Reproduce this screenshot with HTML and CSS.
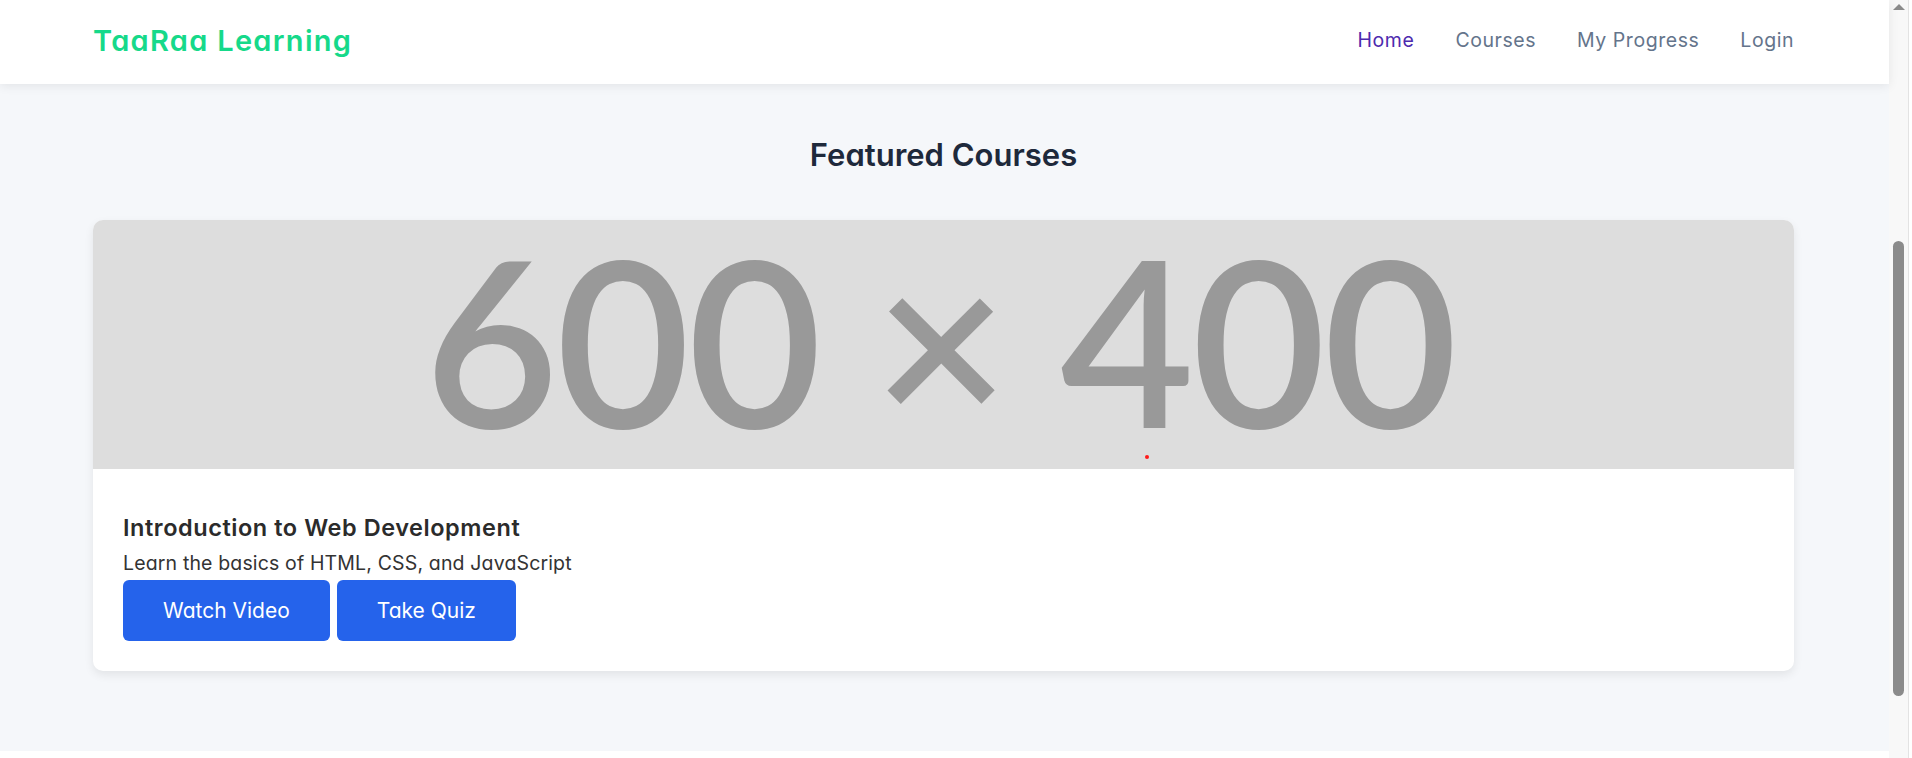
FILE: index.html
```html
<!DOCTYPE html>
<html lang="en">
<head>
<meta charset="utf-8">
<title>TaaRaa Learning</title>
<link rel="stylesheet" href="styles.css">
</head>
<body>
<div class="page">
  <header class="site-header">
    <a class="logo" href="#">TaaRaa Learning</a>
    <nav class="nav">
      <a class="nav-link active" href="#">Home</a>
      <a class="nav-link" href="#">Courses</a>
      <a class="nav-link" href="#">My Progress</a>
      <a class="nav-link" href="#">Login</a>
    </nav>
  </header>
  <main class="featured">
    <h2 class="section-title">Featured Courses</h2>
    <div class="course-card">
      <div class="course-thumb">
        <span class="thumb-label">600 × 400</span>
        <i class="thumb-dot"></i>
      </div>
      <div class="course-body">
        <h3 class="course-title">Introduction to Web Development</h3>
        <p class="course-desc">Learn the basics of HTML, CSS, and JavaScript</p>
        <div class="course-actions">
          <button class="btn">Watch Video</button>
          <button class="btn">Take Quiz</button>
        </div>
      </div>
    </div>
  </main>
  <footer class="site-footer"></footer>
</div>
<div class="scrollbar" aria-hidden="true">
  <div class="scroll-up"><span class="scroll-arrow"></span></div>
  <div class="scroll-thumb"></div>
</div>
</body>
</html>
```

FILE: styles.css
```css
html, body {
  height: 100%;
}
body {
  margin: 0;
  display: flex;
  overflow: hidden;
  background: #f5f7fa;
  font-family: Inter, "Noto Sans", sans-serif;
  font-feature-settings: "cv11";
  color: #333333;
}

.page {
  flex: 1;
  min-width: 0;
  display: flex;
  flex-direction: column;
}

/* scrollbar column */
.scrollbar {
  width: 23px;
  flex: none;
  display: flex;
  flex-direction: column;
  background: linear-gradient(to right, #f8f8f8 0 19px, #e3e3e3 19px 20px, #ffffff 20px);
}
.scroll-up {
  height: 17px;
  width: 19px;
  box-sizing: border-box;
  padding-top: 4px;
  display: flex;
  justify-content: center;
}
.scroll-arrow {
  width: 0;
  height: 0;
  border-left: 6.5px solid transparent;
  border-right: 6.5px solid transparent;
  border-bottom: 6px solid #8b8b8b;
}
.scroll-thumb {
  margin: 224px 0 0 4px;
  width: 11px;
  height: 455px;
  border-radius: 6px;
  background: #8b8b8b;
}

/* header */
.site-header {
  flex: none;
  position: relative;
  z-index: 2;
  height: 84px;
  box-sizing: border-box;
  padding: 0 95px 4px 93px;
  background: #ffffff;
  box-shadow: 0 2px 10px rgba(0, 0, 0, 0.08);
  display: flex;
  align-items: center;
  justify-content: space-between;
}
.logo {
  font-size: 29px;
  font-weight: 600;
  letter-spacing: 1.3px;
  color: #16d98a;
  text-decoration: none;
}
.nav {
  display: flex;
  gap: 41px;
}
.nav-link {
  font-size: 19.5px;
  letter-spacing: 0.55px;
  color: #64748b;
  text-decoration: none;
}
.nav-link.active {
  color: #4d2aae;
}

/* featured */
.featured {
  flex: none;
  padding: 52px 95px 80px 93px;
}
.section-title {
  margin: 0 0 47px;
  text-align: center;
  font-size: 31px;
  line-height: 1.2;
  font-weight: 600;
  color: #1e293b;
}

.course-card {
  background: #ffffff;
  border-radius: 10px;
  box-shadow: 0 4px 10px rgba(0, 0, 0, 0.08);
}
.course-thumb {
  position: relative;
  height: 249px;
  box-sizing: border-box;
  padding: 0 8px 14px 0;
  border-radius: 10px 10px 0 0;
  background: #dddddd;
  display: flex;
  align-items: center;
  justify-content: center;
}
.thumb-label {
  font-family: Lato, sans-serif;
  font-size: 232px;
  font-weight: 600;
  line-height: 200px;
  letter-spacing: -3px;
  color: #999999;
  white-space: nowrap;
}
.thumb-dot {
  position: absolute;
  left: 1052px;
  top: 235px;
  width: 4px;
  height: 4px;
  border-radius: 50%;
  background: #ff1a1a;
}

.course-body {
  padding: 30px;
}
.course-title {
  margin: 12px 0 0;
  font-size: 23.5px;
  line-height: 33px;
  letter-spacing: 0.55px;
  font-weight: 600;
  color: #2b2b2b;
}
.course-desc {
  margin: 5px 0 2px;
  font-size: 19.5px;
  line-height: 28.5px;
  letter-spacing: 0.15px;
  color: #333333;
}
.course-actions {
  display: flex;
  gap: 7px;
}
.btn {
  font-family: inherit;
  font-feature-settings: "cv11";
  font-size: 21px;
  line-height: 29px;
  padding: 16px 40px;
  border: none;
  border-radius: 6px;
  background: #2563eb;
  color: #ffffff;
  cursor: pointer;
}

.site-footer {
  flex: 1;
  background: #ffffff;
}
```
